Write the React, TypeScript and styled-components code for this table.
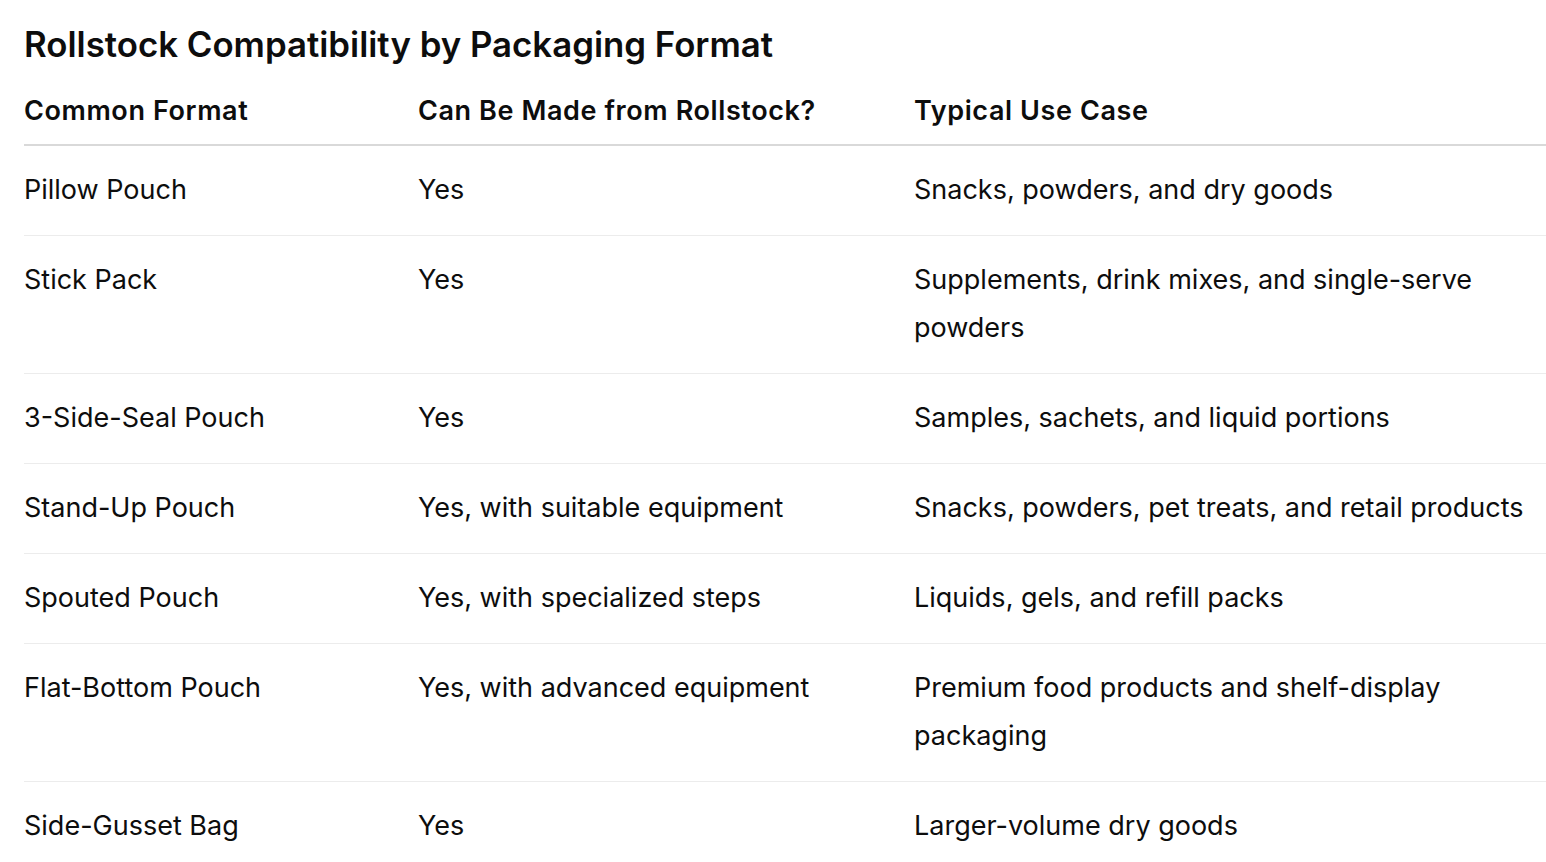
import styled, { createGlobalStyle } from "styled-components";

const GlobalStyle = createGlobalStyle`
  html, body {
    margin: 0;
    padding: 0;
    background: #ffffff;
  }
  body {
    font-family: Inter, "Noto Sans", "Liberation Sans", sans-serif;
    color: #0d0d0d;
    -webkit-font-smoothing: antialiased;
  }
`;

const Page = styled.div`
  padding: 24px 0 0 24px;
  width: 1522px;
  overflow: hidden;
`;

const Title = styled.h3`
  margin: 0 0 23px;
  font-size: 34.8px;
  line-height: 40px;
  font-weight: 600;
  letter-spacing: 0;
`;

const Table = styled.table`
  width: 1522px;
  border-collapse: collapse;
  table-layout: fixed;
`;

const HeadCell = styled.th`
  text-align: left;
  font-size: 27px;
  line-height: 48px;
  font-weight: 600;
  letter-spacing: 0.6px;
  padding: 0 24px 9px 0;
  border-bottom: 2px solid #d9d9d9;
  vertical-align: bottom;
`;

const Row = styled.tr<{ $last?: boolean }>`
  border-bottom: ${(p) => (p.$last ? "none" : "1px solid #ececec")};
`;

const Cell = styled.td`
  font-size: 27px;
  line-height: 48px;
  font-weight: 400;
  padding: 20px 16px 21px 0;
  vertical-align: top;
`;

const rows = [
  ["Pillow Pouch", "Yes", "Snacks, powders, and dry goods"],
  ["Stick Pack", "Yes", "Supplements, drink mixes, and single-serve powders"],
  ["3-Side-Seal Pouch", "Yes", "Samples, sachets, and liquid portions"],
  ["Stand-Up Pouch", "Yes, with suitable equipment", "Snacks, powders, pet treats, and retail products"],
  ["Spouted Pouch", "Yes, with specialized steps", "Liquids, gels, and refill packs"],
  ["Flat-Bottom Pouch", "Yes, with advanced equipment", "Premium food products and shelf-display packaging"],
  ["Side-Gusset Bag", "Yes", "Larger-volume dry goods"],
];

const App = () => {
  return (
    <Page>
      <GlobalStyle />
      <Title>Rollstock Compatibility by Packaging Format</Title>
      <Table>
        <colgroup>
          <col style={{ width: 394 }} />
          <col style={{ width: 496 }} />
          <col style={{ width: 632 }} />
        </colgroup>
        <thead>
          <tr>
            <HeadCell>Common Format</HeadCell>
            <HeadCell>Can Be Made from Rollstock?</HeadCell>
            <HeadCell>Typical Use Case</HeadCell>
          </tr>
        </thead>
        <tbody>
          {rows.map((r, i) => (
            <Row key={r[0]} $last={i === rows.length - 1}>
              <Cell>{r[0]}</Cell>
              <Cell>{r[1]}</Cell>
              <Cell>{r[2]}</Cell>
            </Row>
          ))}
        </tbody>
      </Table>
    </Page>
  );
};
export default App;
